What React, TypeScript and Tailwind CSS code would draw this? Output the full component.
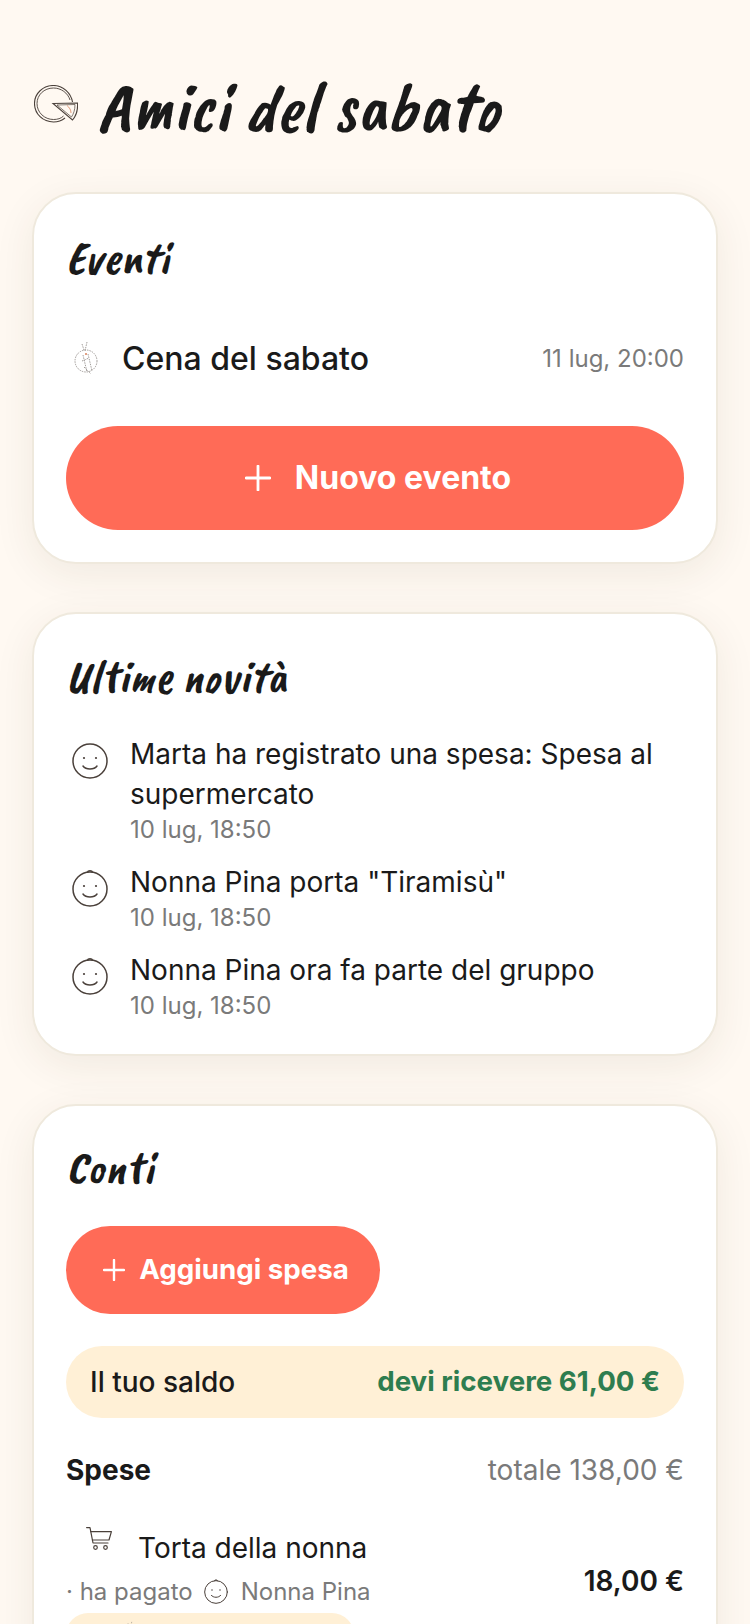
import React from "react";

const script = "font-['Caveat_Brush','Caveat',cursive] font-normal italic";
const card = "rounded-[44px] border-2 border-[#efe9dd] bg-white px-[32px] shadow-[0_10px_40px_rgba(70,50,20,0.08)]";

function PizzaLogo() {
  return (
    <svg width="44" height="38" viewBox="0 0 44 38" fill="none" stroke="#4a403a" strokeWidth="1.1" className="mb-[4px]">
      <path d="M38.5 17 C37 8 29 0.5 19.5 0.5 C9 0.5 0.5 8.5 0.5 18.5 C0.5 29 9 37 19.5 37 C24 37 28 35.5 31 33" />
      <path d="M36 15 C34 8 27 3 19.5 3 C10 3 3 10 3 18.5 C3 27.5 10.5 34.5 19.5 34.5 C23.5 34.5 27 33.5 29.5 31" strokeWidth="0.9" />
      <path d="M19 18.5 L43.5 18 C44 25 42 31 38.5 35 Z" fill="#fff9f2" />
      <path d="M23 20 L41 19.5 C41 25 39.5 29 37.5 32 Z" strokeWidth="0.7" />
      <path d="M33 20.5 C35.5 22.5 37 25 37 28" stroke="#d9825b" strokeWidth="0.8" />
    </svg>
  );
}

function PastaIcon({ width = 24, height = 37 }: { width?: number; height?: number }) {
  return (
    <svg width={width} height={height} viewBox="0 0 24 37" fill="none" stroke="#8a8480" strokeWidth="0.8" strokeDasharray="1.5 1">
      <circle cx="12" cy="20" r="11" />
      <path d="M8 3 L10 9 M13 1 L11 10 M9 14 L13 31 M14 13 L18 30 M8 20 L15 17 M10 26 L17 33" />
      <circle cx="12" cy="13" r="1" fill="#d9825b" stroke="none" />
    </svg>
  );
}

// baby = a little curl on top of the head
function Face({ size = 36, baby = false }: { size?: number; baby?: boolean }) {
  return (
    <svg width={size} height={size} viewBox="0 0 36 36" fill="none" stroke="#4a403a" strokeWidth="1.5" strokeLinecap="round" className="overflow-visible">
      <circle cx="18" cy="18" r="17" />
      {baby && <path d="M15.5 1.2 C16 -0.8 20 -0.8 20.5 1.2" />}
      <circle cx="12" cy="15" r="1.1" fill="#4a403a" stroke="none" />
      <circle cx="24" cy="15" r="1.1" fill="#4a403a" stroke="none" />
      <path d="M11 23 C14 27 22 27 25 23" />
    </svg>
  );
}

function CartIcon() {
  return (
    <svg width="26" height="23" viewBox="0 0 26 23" fill="none" stroke="#4a403a" strokeWidth="1.2" strokeLinecap="round" strokeLinejoin="round" className="-mt-px">
      <path d="M0.6 0.6 H4 L7 16 H22" />
      <path d="M4.6 4.6 H25.4 L23 13 H6.4" />
      <circle cx="9.5" cy="20.5" r="1.8" />
      <circle cx="19.5" cy="20.5" r="1.8" />
    </svg>
  );
}

function PlusIcon({ size }: { size: number }) {
  return (
    <svg width={size} height={size} viewBox="0 0 24 24" fill="none" stroke="white" strokeWidth="2.6" strokeLinecap="round">
      <path d="M12 1 V23 M1 12 H23" />
    </svg>
  );
}

function Novita({ text, baby, top }: { text: React.ReactNode; baby?: boolean; top: string }) {
  return (
    <div className={`flex gap-[22px] pl-[6px] ${top}`}>
      <div className="flex shrink-0 pt-[9px]">
        <Face baby={baby} />
      </div>
      <div className="min-w-0">
        <p className="text-[28px] leading-[40px] text-[#1a1a1a]">{text}</p>
        <p className="text-[24px] leading-[32px] text-[#7a7a7a]">10 lug, 18:50</p>
      </div>
    </div>
  );
}

export default function App() {
  return (
    <main className="h-[1624px] overflow-hidden bg-[#fff9f2] px-[32px] pt-[64px] font-['Inter',sans-serif] text-[#1a1a1a]">
      <header className="flex h-[84px] items-center gap-[20px] pl-[2px]">
        <PizzaLogo />
        <h1 className={`${script} text-[71px] leading-none`}>Amici del sabato</h1>
      </header>

      <section className={`mt-[44px] pb-[32px] ${card}`}>
        <h2 className={`${script} pt-[34px] text-[47px] leading-[60px]`}>Eventi</h2>
        <div className="mt-[41px] flex h-[60px] items-center justify-between">
          <div className="flex items-center gap-[24px] pl-[8px]">
            <PastaIcon />
            <span className="text-[32px] font-medium">Cena del sabato</span>
          </div>
          <span className="text-[24px] text-[#7a7a7a]">11 lug, 20:00</span>
        </div>
        <button className="mt-[37px] flex h-[104px] w-full items-center justify-center gap-[24px] rounded-full bg-[#ff6b57] pl-[6px] text-[32px] font-bold text-white">
          <PlusIcon size={26} />
          Nuovo evento
        </button>
      </section>

      <section className={`mt-[48px] pb-[32px] ${card}`}>
        <h2 className={`${script} pt-[33px] text-[47px] leading-[60px]`}>Ultime novità</h2>
        <Novita top="mt-[27px]" text="Marta ha registrato una spesa: Spesa al supermercato" />
        <Novita top="mt-[16px]" baby text={'Nonna Pina porta "Tiramisù"'} />
        <Novita top="mt-[16px]" baby text="Nonna Pina ora fa parte del gruppo" />
      </section>

      <section className={`mt-[48px] h-[600px] ${card}`}>
        <h2 className={`${script} pt-[32px] text-[47px] leading-[60px]`}>Conti</h2>
        <button className="mt-[28px] flex h-[88px] w-[314px] items-center justify-center gap-[14px] rounded-full bg-[#ff6b57] pl-[6px] text-[27.7px] font-bold text-white">
          <PlusIcon size={22} />
          Aggiungi spesa
        </button>
        <div className="mt-[32px] flex h-[72px] items-center justify-between rounded-full bg-[#fff0d6] px-[24px] text-[28px]">
          <span className="font-medium">Il tuo saldo</span>
          <span className="text-[27.7px] font-bold text-[#2e7d4f]">devi ricevere 61,00 €</span>
        </div>
        <div className="mt-[32px] flex h-[40px] items-center justify-between text-[28px]">
          <span className="font-bold">Spese</span>
          <span className="text-[#7a7a7a]">totale 138,00 €</span>
        </div>
        <div className="mt-[38px] flex items-start justify-between">
          <div className="min-w-0">
            <div className="flex h-[40px] items-start gap-[26px] pl-[20px]">
              <CartIcon />
              <span className="text-[28px] leading-[40px]">Torta della nonna</span>
            </div>
            <div className="mt-[9px] flex h-[30px] items-center gap-[11px] text-[24px] text-[#7a7a7a]">
              <span>· ha pagato</span>
              <Face size={24} baby />
              <span className="pl-[2px]">Nonna Pina</span>
            </div>
            <div className="mt-[6px] flex h-[44px] w-[288px] items-center whitespace-nowrap rounded-full bg-[#fff0d6] px-[18px] text-[24px]">
              <span>da</span>
              <span className="ml-[10px] mr-[15px] flex shrink-0">
                <PastaIcon width={18} height={28} />
              </span>
              <span>Cena del sabato</span>
            </div>
          </div>
          <span className="pt-[32px] text-[28px] font-semibold">18,00 €</span>
        </div>
      </section>
    </main>
  );
}
